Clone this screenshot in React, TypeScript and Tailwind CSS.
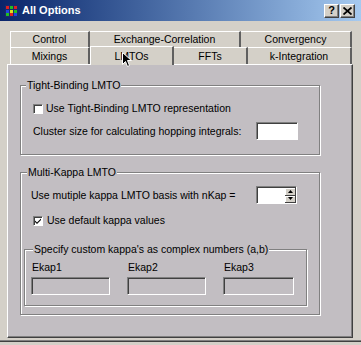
import React from "react";

const PANEL = "bg-[#c2bec2]";

function Sunken({ className = "", white = true }: { className?: string; white?: boolean }) {
  return (
    <div
      className={`border border-t-[#808080] border-l-[#808080] border-b-white border-r-white shadow-[inset_1px_1px_0_#404040] ${
        white ? "bg-white" : ""
      } ${className}`}
    />
  );
}

function Check({ checked }: { checked?: boolean }) {
  return (
    <div className="w-[10px] h-[10px] bg-white border border-t-[#808080] border-l-[#808080] border-b-white border-r-white shadow-[inset_1px_1px_0_#404040] flex items-center justify-center">
      {checked && (
        <svg width="8" height="8" viewBox="0 0 8 8">
          <path d="M1 3.5 L3 5.5 L7 1.5 L7 3 L3 7 L1 5 Z" fill="#000" />
        </svg>
      )}
    </div>
  );
}

function Tab({
  label,
  w,
  first,
  selected,
  h,
}: {
  label: string;
  w: string;
  first?: boolean;
  selected?: boolean;
  h: string;
}) {
  return (
    <div
      className={`${w} ${h} flex items-center justify-center border-t border-t-white ${
        first || selected ? "border-l border-l-white" : ""
      } border-r-2 border-r-[#606060] ${selected ? "relative z-10 -mt-[1px] -mb-[1px] h-[19px] bg-[#d4d0c8]" : ""}`}
    >
      <span className="leading-[13px]">{label}</span>
    </div>
  );
}

export default function App() {
  return (
    <div className="w-[361px] h-[345px] bg-[#d4d0c8] overflow-hidden relative text-[10.5px] text-black font-['Liberation_Sans',Arial,sans-serif]">
      {/* title bar */}
      <div className="h-[21px] flex items-center bg-gradient-to-r from-[#0a246a] to-[#a6caf0]">
        <svg width="13" height="12" viewBox="0 0 13 12" className="ml-[5px]">
          <rect x="0" y="0" width="13" height="12" fill="#1a2a6a" />
          <rect x="1" y="1" width="3" height="3" fill="#e02020" />
          <rect x="5" y="1" width="3" height="3" fill="#20c020" />
          <rect x="9" y="1" width="3" height="3" fill="#e02020" />
          <rect x="1" y="5" width="3" height="3" fill="#2040e0" />
          <rect x="5" y="5" width="3" height="3" fill="#e0e020" />
          <rect x="9" y="5" width="3" height="3" fill="#20c020" />
          <rect x="1" y="8" width="3" height="3" fill="#20c020" />
          <rect x="5" y="8" width="3" height="3" fill="#e02020" />
          <rect x="9" y="8" width="3" height="3" fill="#2040e0" />
        </svg>
        <span className="ml-[4px] text-white font-bold text-[11px] leading-[13px]">All Options</span>
        <div className="ml-auto mr-[6px] flex gap-[1px]">
          <div className="w-[15px] h-[14px] bg-[#d4d0c8] border border-t-white border-l-white border-b-[#404040] border-r-[#404040] shadow-[inset_-1px_-1px_0_#808080] flex items-center justify-center">
            <span className="font-bold text-[11px] leading-[11px]">?</span>
          </div>
          <div className="w-[15px] h-[14px] bg-[#d4d0c8] border border-t-white border-l-white border-b-[#404040] border-r-[#404040] shadow-[inset_-1px_-1px_0_#808080] flex items-center justify-center">
            <svg width="9" height="8" viewBox="0 0 9 8">
              <path d="M0.5 0.5 L8.5 7.5 M8.5 0.5 L0.5 7.5" stroke="#000" strokeWidth="1.8" />
            </svg>
          </div>
        </div>
      </div>

      {/* tab rows */}
      <div className="mt-[10px] ml-[10px] flex">
        <Tab label="Control" w="w-[80px]" h="h-[16px]" first />
        <Tab label="Exchange-Correlation" w="w-[151px]" h="h-[16px]" />
        <Tab label="Convergency" w="w-[111px]" h="h-[16px]" />
      </div>
      <div className="ml-[10px] flex items-start h-[17px]">
        <Tab label="Mixings" w="w-[80px]" h="h-[17px]" first />
        <Tab label="LMTOs" w="w-[84px]" h="h-[17px]" selected />
        <Tab label="FFTs" w="w-[74px]" h="h-[17px]" />
        <Tab label="k-Integration" w="w-[104px]" h="h-[17px]" />
      </div>

      {/* panel */}
      <div
        className={`ml-[7px] w-[346px] h-[274px] ${PANEL} border border-t-white border-l-white border-b-[#404040] border-r-[#404040] shadow-[inset_-1px_-1px_0_#808080] flex flex-col`}
      >
        {/* Tight-Binding group */}
        <div className="ml-[12px] mt-[20px] w-[300px] h-[70px] border border-[#808080] shadow-[inset_1px_1px_0_#fff,1px_1px_0_#fff] flex flex-col">
          <span className={`-mt-[7px] ml-[5px] px-[1px] self-start leading-[13px] ${PANEL}`}>Tight-Binding LMTO</span>
          <div className="mt-[10px] ml-[12px] h-[13px] flex items-center gap-[3px]">
            <Check />
            <span className="leading-[13px]">Use Tight-Binding LMTO representation</span>
          </div>
          <div className="mt-[7px] ml-[12px] h-[18px] flex items-center">
            <span className="w-[223px] shrink-0 leading-[13px]">Cluster size for calculating hopping integrals:</span>
            <Sunken className="w-[42px] h-[18px] shrink-0" />
          </div>
        </div>

        {/* Multi-Kappa group */}
        <div className="ml-[12px] mt-[17px] w-[300px] h-[143px] border border-[#808080] shadow-[inset_1px_1px_0_#fff,1px_1px_0_#fff] flex flex-col">
          <span className={`-mt-[7px] ml-[6px] px-[1px] self-start leading-[13px] ${PANEL}`}>Multi-Kappa LMTO</span>
          <div className="mt-[7px] ml-[10px] h-[18px] flex items-center">
            <span className="w-[225px] shrink-0 leading-[13px]">Use mutiple kappa LMTO basis with nKap =</span>
            <div className="w-[41px] h-[18px] shrink-0 bg-white border border-t-[#808080] border-l-[#808080] border-b-white border-r-white shadow-[inset_1px_1px_0_#404040] flex justify-end">
              <div className="w-[11px] flex flex-col pt-[1px]">
                <div className="h-[8px] bg-[#d4d0c8] border-r border-b border-[#404040] shadow-[inset_1px_1px_0_#fff] flex items-center justify-center">
                  <svg width="5" height="3" viewBox="0 0 5 3"><path d="M2.5 0 L5 3 L0 3 Z" fill="#000" /></svg>
                </div>
                <div className="h-[8px] bg-[#d4d0c8] border-r border-b border-[#404040] shadow-[inset_1px_1px_0_#fff] flex items-center justify-center">
                  <svg width="5" height="3" viewBox="0 0 5 3"><path d="M0 0 L5 0 L2.5 3 Z" fill="#000" /></svg>
                </div>
              </div>
            </div>
          </div>
          <div className="mt-[10px] ml-[12px] h-[13px] flex items-center gap-[4px]">
            <Check checked />
            <span className="leading-[13px]">Use default kappa values</span>
          </div>

          {/* inner group */}
          <div className="mt-[22px] ml-[3px] w-[283px] h-[57px] border border-[#808080] shadow-[inset_1px_1px_0_#fff,1px_1px_0_#fff] flex flex-col">
            <span className={`-mt-[7px] ml-[8px] px-[1px] self-start leading-[13px] ${PANEL}`}>
              Specify custom kappa's as complex numbers (a,b)
            </span>
            <div className="mt-[5px] ml-[6px] flex">
              {[
                { l: "Ekap1", w: "w-[79px]", c: "w-[96px]" },
                { l: "Ekap2", w: "w-[79px]", c: "w-[96px]" },
                { l: "Ekap3", w: "w-[71px]", c: "w-[72px]" },
              ].map((e) => (
                <div key={e.l} className={`${e.c} shrink-0 flex flex-col`}>
                  <span className="ml-[1px] leading-[13px] h-[13px]">{e.l}</span>
                  <Sunken className={`mt-[3px] ${e.w} h-[18px]`} white={false} />
                </div>
              ))}
            </div>
          </div>
        </div>
      </div>

      {/* window bottom frame */}
      <div className="mt-[2px] h-[1px] bg-[#808080]" />
      <div className="h-[1px] bg-[#404040]" />

      {/* mouse cursor */}
      <svg width="12" height="16" viewBox="0 0 12 16" className="absolute left-[122px] top-[52px] z-20">
        <path d="M0.5 0.5 L0.5 12.5 L3.5 9.5 L5.5 14.5 L7.5 13.5 L5.5 8.5 L9.5 8.5 Z" fill="#000" stroke="#fff" strokeWidth="1" />
      </svg>
    </div>
  );
}
